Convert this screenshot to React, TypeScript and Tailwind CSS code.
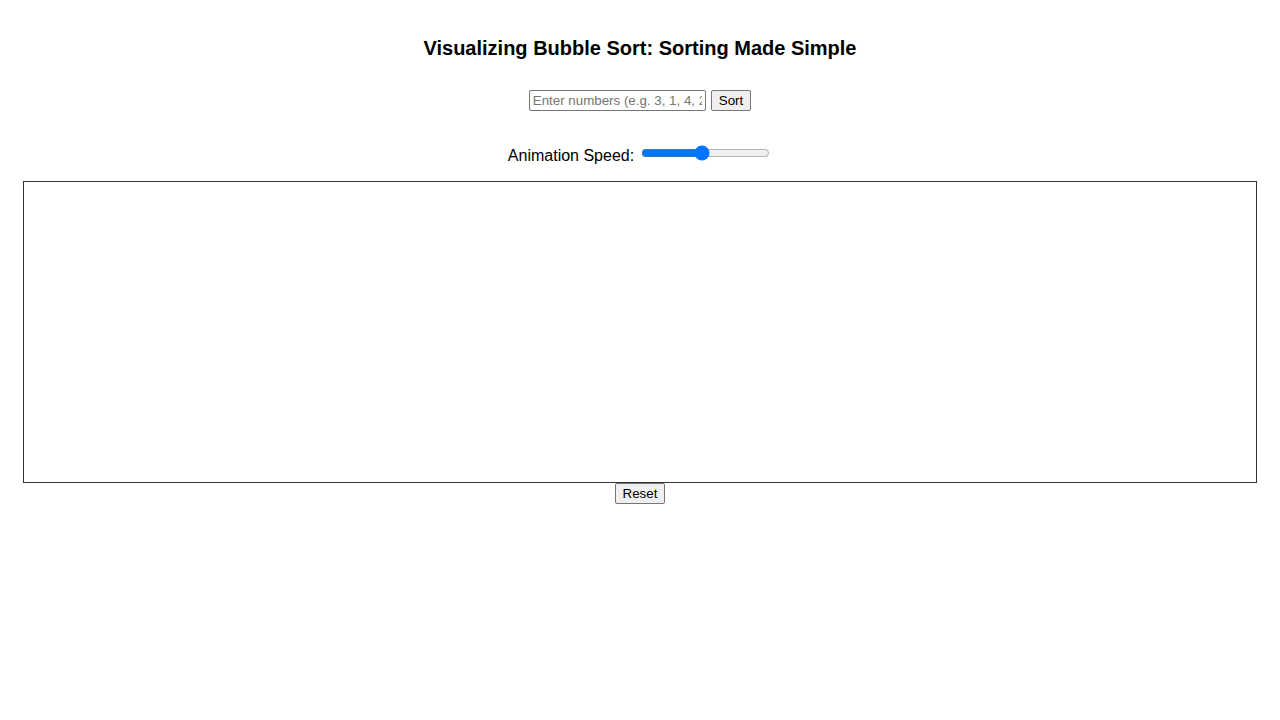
import React from "react";

export default function App() {
  const btn =
    "h-[21px] px-[7px] bg-[#efefef] border border-[#767676] rounded-[2px] text-[13.333px] leading-[15px] text-black";
  return (
    <div className="min-h-[720px] bg-white text-black font-['Liberation_Sans',Arial,sans-serif] flex flex-col items-center">
      <h1 className="mt-[37px] text-[20px] leading-[23px] font-bold">
        Visualizing Bubble Sort: Sorting Made Simple
      </h1>
      <div className="mt-[30px] flex items-center gap-[5px]">
        <input
          type="text"
          placeholder="Enter numbers (e.g. 3, 1, 4, 2)"
          className="w-[177px] h-[21px] px-[3px] border border-[#767676] rounded-[2px] text-[13.333px] placeholder:text-[#757575] outline-none"
        />
        <button className={btn}>Sort</button>
      </div>
      <div className="mt-[33px] mr-[2px] flex items-center gap-[7px] h-[18px]">
        <label className="text-[16px] leading-[18px] mt-[5px]">Animation Speed:</label>
        <input
          type="range"
          min={0}
          max={100}
          defaultValue={47}
          className="w-[129px] accent-[#0075ff]"
        />
      </div>
      <div className="mt-[19px] self-stretch mx-[23px] h-[302px] border border-[#333]" />
      <button className={btn}>Reset</button>
    </div>
  );
}
